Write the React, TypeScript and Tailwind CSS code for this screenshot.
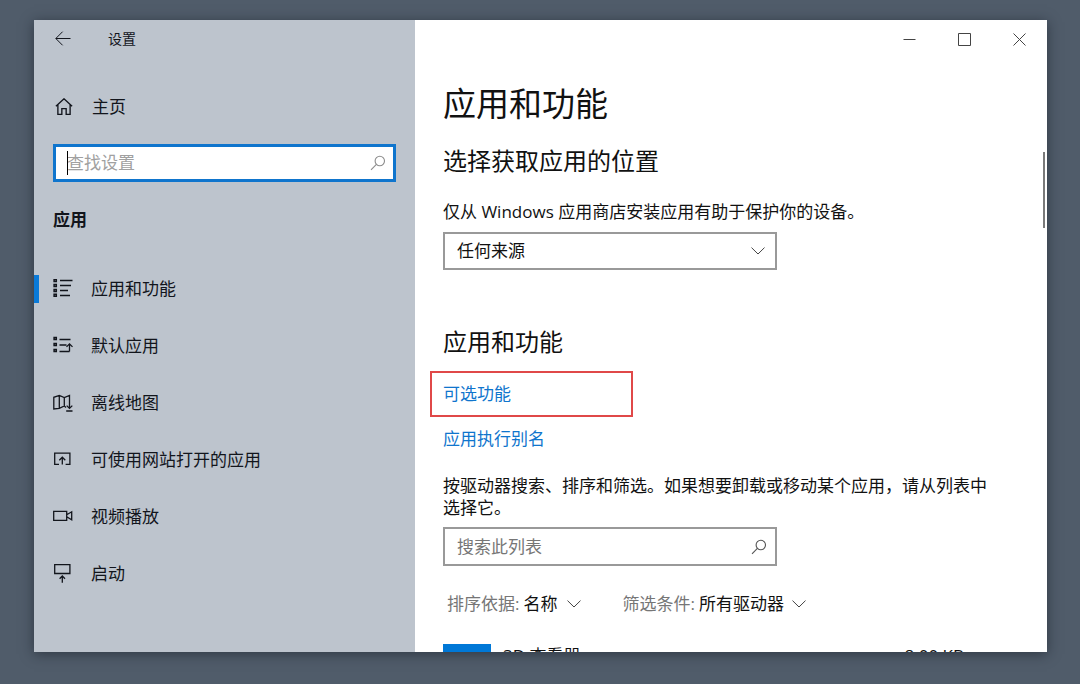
import { useState } from "react";
import type { ReactNode } from "react";
import clsx from "clsx";

function Icon({ children, className = "size-5" }: { children: ReactNode; className?: string }) {
  return (
    <svg
      viewBox="0 0 20 20"
      fill="none"
      stroke="currentColor"
      strokeWidth="1.3"
      className={clsx("shrink-0", className)}
      aria-hidden="true"
    >
      {children}
    </svg>
  );
}

function SearchIcon() {
  return (
    <svg viewBox="0 0 16 16" fill="none" stroke="currentColor" strokeWidth="1.1" className="size-4" aria-hidden="true">
      <circle cx="9.8" cy="6" r="4.7" />
      <path d="M6.4 9.4 1 14.9" />
    </svg>
  );
}

function Chevron() {
  return (
    <svg viewBox="0 0 14 8" fill="none" stroke="#444" className="h-2 w-3.5" aria-hidden="true">
      <path d="m.5.6 6.5 6.4L13.5.6" />
    </svg>
  );
}

const navItems = [
  {
    label: "应用和功能",
    icon: (
      <>
        <path d="M7 1.5h12.5M7 6.5h11M7 11.5h8M7 16.5h10" />
        <path d="M1.1.6h2.2v2H1.1zM1.1 5.4h2.2v2H1.1zM1.1 10.4h2.2v2H1.1zM1.1 15.2h2.2v2H1.1z" strokeWidth="1.5" />
      </>
    ),
  },
  {
    label: "默认应用",
    icon: (
      <>
        <path d="M6.5 3.5h11M6.5 9h7M6.5 15.5h10M16.5 15.5V8M13.5 10.9l3-3 3 3" />
        <path d="M1.1 1.4h2.2v2H1.1zM1.1 7.4h2.2v2H1.1zM1.1 13.4h2.2v2H1.1z" strokeWidth="1.5" />
      </>
    ),
  },
  {
    label: "离线地图",
    icon: (
      <path d="M13 14.5 11.3 13l-5 2.4L.8 16V4.3L6.3 2.5l5 2 5.2-2V9M6.3 2.5v12.9M11.3 4.5V13M16.5 9v6.4M13.7 12.6l2.8 2.8 2.8-2.8M13.2 18h6.3" />
    ),
  },
  {
    label: "可使用网站打开的应用",
    icon: <path d="M6 14.3H1.7V3.2h15.2v11.1h-4.3M9.3 14.5V7.4M6.3 10.2l3-3 3 3" />,
  },
  {
    label: "视频播放",
    icon: <path d="M.7 4.3h13v9H.7zM13.7 7.8l5-3v8l-5-3" />,
  },
  {
    label: "启动",
    icon: <path d="M1.7.7h15.2v8.8H1.7zM9.3 18.8v-6.5M6.6 14.7l2.7-2.7 2.7 2.7" />,
  },
];

function Sidebar() {
  const [active, setActive] = useState(0);

  return (
    <aside className="w-[381px] shrink-0 bg-[#bdc4cd] text-[#12151c]">
      <div className="flex h-[38px] items-center gap-[37px] pl-[21px]">
        <button type="button" aria-label="返回">
          <svg viewBox="0 0 16 16" fill="none" stroke="currentColor" className="size-4" aria-hidden="true">
            <path d="M15.5 7.5H1M7.6.7.8 7.5l6.8 6.8" />
          </svg>
        </button>
        <span className="text-sm">设置</span>
      </div>

      <button type="button" className="mt-[30px] flex h-[38px] items-center gap-[19px] pl-[21px]">
        <Icon className="size-[18px]">
          <path d="M1 9.2 10 .9l9 8.3M3.2 7.4v10.8h4.4v-6.4h4.8v6.4h4.4V7.4" strokeWidth="1.5" />
        </Icon>
        主页
      </button>

      <div className="relative mx-[19px] mt-[18px] flex h-[38px] items-center border-[3px] border-[#0f75cd] bg-white">
        <input
          type="text"
          aria-label="查找设置"
          placeholder="查找设置"
          className="w-full bg-transparent pl-[11px] caret-transparent outline-none placeholder:text-[#a0a0a0]"
        />
        <span className="absolute top-1 left-[11px] h-6 w-px bg-black" />
        <span className="pr-[7px] text-[#8d8d8d]">
          <SearchIcon />
        </span>
      </div>

      <h2 className="mt-[26px] pl-[19px] leading-6 font-bold">应用</h2>

      <nav className="mt-7">
        {navItems.map((item, i) => (
          <button
            key={item.label}
            type="button"
            onClick={() => setActive(i)}
            className="flex h-[57px] w-full items-center"
          >
            <span className={clsx("h-7 w-[5px]", i === active && "bg-[#0a7ad8]")} />
            <span className="flex items-center gap-[18px] pl-3.5">
              <Icon>{item.icon}</Icon>
              {item.label}
            </span>
          </button>
        ))}
      </nav>
    </aside>
  );
}

function WindowControls() {
  const controls = [
    { label: "最小化", d: "M.5 6.5h12" },
    { label: "最大化", d: "M.5.5h12v12H.5z" },
    { label: "关闭", d: "m.5.5 12 12M12.5.5l-12 12" },
  ];

  return (
    <div className="flex h-[38px] justify-end">
      {controls.map((c) => (
        <button key={c.label} type="button" aria-label={c.label} className="flex w-[55px] items-center justify-center">
          <svg viewBox="0 0 13 13" fill="none" stroke="#444" className="size-[13px]" aria-hidden="true">
            <path d={c.d} />
          </svg>
        </button>
      ))}
    </div>
  );
}

function FilterSelect({ id, label, options, width }: { id: string; label: string; options: string[]; width: string }) {
  return (
    <div className="flex items-center gap-1">
      <label htmlFor={id} className="text-[#767676]">
        {label}
      </label>
      <div className={clsx("relative flex items-center", width)}>
        <select id={id} className="w-full appearance-none bg-transparent outline-none">
          {options.map((o) => (
            <option key={o}>{o}</option>
          ))}
        </select>
        <span className="pointer-events-none absolute right-0">
          <Chevron />
        </span>
      </div>
    </div>
  );
}

function Content() {
  return (
    <main className="relative min-w-0 grow bg-white text-[#111]">
      <WindowControls />

      <div className="pr-12 pl-7">
        <h1 className="mt-6 text-[33px] leading-[44px]">应用和功能</h1>

        <h2 className="mt-[19px] text-2xl leading-8">选择获取应用的位置</h2>
        <label htmlFor="source" className="mt-6 block">
          仅从 Windows 应用商店安装应用有助于保护你的设备。
        </label>
        <div className="relative mt-[9px] flex h-[38px] w-[334px] items-center border-2 border-[#999]">
          <select id="source" className="h-full w-full appearance-none bg-transparent pl-3 outline-none">
            <option>任何来源</option>
            <option>仅 Microsoft Store</option>
          </select>
          <span className="pointer-events-none absolute right-[10px]">
            <Chevron />
          </span>
        </div>

        <h2 className="mt-14 text-2xl leading-8">应用和功能</h2>
        <div className="mt-[13px] -ml-[13px] flex h-[46px] w-[203px] items-center border-2 border-[#e04848] pl-[11px]">
          <a href="#optional" className="text-[#0f75cd]">
            可选功能
          </a>
        </div>
        <a href="#alias" className="mt-[11px] block w-fit text-[#0f75cd]">
          应用执行别名
        </a>

        <p className="mt-[25px]">按驱动器搜索、排序和筛选。如果想要卸载或移动某个应用，请从列表中选择它。</p>
        <div className="mt-2 flex h-[39px] w-[334px] items-center border-2 border-[#999]">
          <input
            type="text"
            aria-label="搜索此列表"
            placeholder="搜索此列表"
            className="w-full bg-transparent pl-3 outline-none placeholder:text-[#767676]"
          />
          <span className="pr-2 text-[#555]">
            <SearchIcon />
          </span>
        </div>

        <div className="mt-[27px] flex gap-[41px] pl-1">
          <FilterSelect id="sort" label="排序依据:" options={["名称", "大小", "安装日期"]} width="w-[58px]" />
          <FilterSelect id="filter" label="筛选条件:" options={["所有驱动器", "Windows (C:)"]} width="w-[107px]" />
        </div>

        <div className="mt-[29px] flex">
          <div className="size-12 bg-[#0078d7]" />
          <span className="pt-px pl-3">3D 查看器</span>
          <span className="ml-auto pt-px pr-[35px]">8.00 KB</span>
        </div>
      </div>

      <div className="absolute top-[132px] right-[2px] h-[76px] w-[2px] bg-[#7a7a7a]" />
    </main>
  );
}

export default function App() {
  return (
    <div className="flex h-screen bg-[#505c6a] pt-5 pr-[33px] pb-8 pl-[34px] font-['Open_Sans','Noto_Sans_CJK_SC',sans-serif] text-[17px] leading-[22px]">
      <div className="flex grow overflow-hidden shadow-[0_2px_12px_rgba(20,25,35,0.55)]">
        <Sidebar />
        <Content />
      </div>
    </div>
  );
}
